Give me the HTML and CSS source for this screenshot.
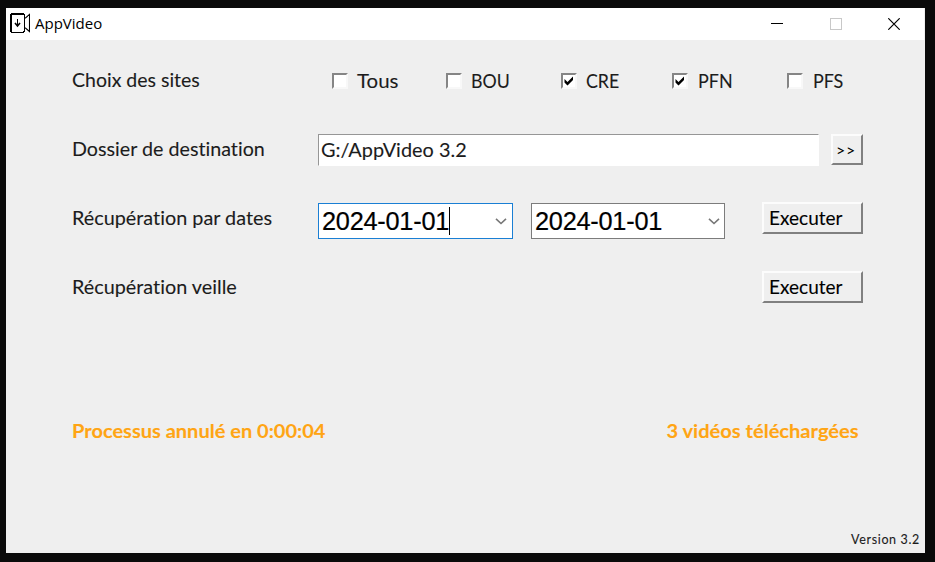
FILE: index.html
```html
<!DOCTYPE html>
<html lang="fr">
<head>
<meta charset="utf-8">
<title>AppVideo</title>
<link rel="stylesheet" href="styles.css">
</head>
<body>
<main class="window">
  <header class="titlebar">
    <svg class="app-icon" width="20" height="20" viewBox="0 0 20 20" fill="none" stroke="#000" shape-rendering="crispEdges">
      <rect x="0.75" y="0.75" width="13.5" height="18.5" rx="1.5" stroke-width="1.5"/>
      <path d="M7.5 6v7" stroke-width="1.4"/>
      <path d="M5 10l2.500 3 2.500-3" stroke-width="1.600" shape-rendering="auto"/>
      <path d="M14 5l1.500 0L19.500 1.500V18.500L15.500 15H14" stroke-width="1.1" shape-rendering="auto"/>
    </svg>
    <h1 class="title">AppVideo</h1>
    <div class="controls">
      <svg width="12" height="12" viewBox="0 0 12 12"><path d="M0 5.500h12" stroke="#000"/></svg>
      <svg width="12" height="12" viewBox="0 0 12 12"><rect x=".5" y=".5" width="11" height="11" fill="none" stroke="#c8c8c8"/></svg>
      <svg width="12" height="12" viewBox="0 0 12 12"><path d="M.3.3l11.400 11.400M11.700.3L.3 11.700" stroke="#000" stroke-width="1.200"/></svg>
    </div>
  </header>
  <section class="form">
    <div class="row">
      <span class="label"><span class="t choix">Choix des sites</span></span>
      <div class="checks">
        <label class="check"><i class="box"></i><span class="t tous">Tous</span></label>
        <label class="check"><i class="box"></i><span class="t site">BOU</span></label>
        <label class="check"><i class="box"><svg width="12" height="12" viewBox="0 0 12 12"><path d="M1.500 4L4.500 7 10 1.500V5L4.500 10.500 1.500 7.500z"/></svg></i><span class="t site">CRE</span></label>
        <label class="check"><i class="box"><svg width="12" height="12" viewBox="0 0 12 12"><path d="M1.500 4L4.500 7 10 1.500V5L4.500 10.500 1.500 7.500z"/></svg></i><span class="t site wide">PFN</span></label>
        <label class="check"><i class="box"></i><span class="t site wide">PFS</span></label>
      </div>
    </div>
    <div class="row">
      <span class="label"><span class="t dossier">Dossier de destination</span></span>
      <div class="entry"><span class="t path">G:/AppVideo 3.2</span></div>
      <button class="button browse"><span class="arrows">&gt;&gt;</span></button>
    </div>
    <div class="row">
      <span class="label"><span class="t recup">Récupération par dates</span></span>
      <div class="combo focused"><span class="date">2024-01-01</span><i class="caret"></i><svg class="chevron" width="12" height="7" viewBox="0 0 12 7"><path d="M1 .8l5 4.700 5-4.700" fill="none" stroke="#777" stroke-width="1.600"/></svg></div>
      <div class="combo second"><span class="date">2024-01-01</span><svg class="chevron" width="12" height="7" viewBox="0 0 12 7"><path d="M1 .8l5 4.700 5-4.700" fill="none" stroke="#777" stroke-width="1.600"/></svg></div>
      <button class="button run"><span class="t exec">Executer</span></button>
    </div>
    <div class="row">
      <span class="label"><span class="t recup">Récupération veille</span></span>
      <button class="button run"><span class="t exec">Executer</span></button>
    </div>
  </section>
  <div class="status">
    <strong class="t s1">Processus annulé en 0:00:04</strong>
    <strong class="t s2">3 vidéos téléchargées</strong>
  </div>
  <footer class="version">Version 3.2</footer>
</main>
</body>
</html>
```

FILE: styles.css
```css
* { box-sizing: border-box; }
html, body { margin: 0; height: 100%; background: #0a0a0a; overflow: hidden; }
body { padding: 8px 10px 9px 6px; font-family: Lato, sans-serif; color: #1c1c1c; font-variant-ligatures: none; }
.window { height: 545px; width: 919px; background: #efefef; display: flex; flex-direction: column; }
.titlebar { height: 32px; width: 918px; background: #fff; display: flex; align-items: center; padding-left: 4px; }
.app-icon { margin-top: -2px; }
.title { margin: -2px 0 0 5px; font: 400 15px/20px "Open Sans", sans-serif; color: #000; white-space: nowrap; }
.controls { margin-left: auto; display: flex; gap: 46px; padding-right: 24px; }
.controls svg:nth-child(1) { margin-right: 1px; }
.form { padding: 6px 62px 0 66px; }
.row { height: 69px; display: flex; padding-top: 19px; }
.row:nth-child(n+3) .button { margin-top: -1px; }
.label { width: 246px; height: 30px; display: flex; align-items: center; flex: none; }
.t { display: inline-block; font-size: 19.500px; line-height: 30px; white-space: nowrap; transform-origin: left center; -webkit-text-stroke: .1px; }
.choix { line-height: 32px; }
.dossier { transform: scaleX(1.010); }
.recup { transform: scaleX(1.016); }
.checks { display: grid; grid-template-columns: 114px 115px 111px 115px 60px; padding-left: 14px; height: 30px; }
.check { display: flex; align-items: center; gap: 9px; }
.check .t { line-height: 32px; }
.tous { transform: scaleX(1.050); }
.site { transform: scaleX(.91); }
.site.wide { transform: translateX(1px) scaleX(.92); }
.box { width: 16px; height: 16px; flex: none; background: #fff; border: 2px solid; border-color: #858585 #f8f8f8 #f8f8f8 #858585; display: block; }
.box svg { display: block; }
.entry { width: 501px; height: 32px; background: #fff; border: 1px solid; border-color: #969696 #fff #fff #969696; padding-left: 2px; }
.path { transform: scaleX(1.020); line-height: 29px; }
.button { border: 2px solid; border-color: #fcfcfc #808080 #808080 #fcfcfc; background: #efefef; height: 32px; padding: 0; margin: 0 0 0 auto; font-family: inherit; color: #000; text-align: left; display: flex; align-items: center; }
.browse { width: 32px; height: 31px; }
.arrows { font-size: 16px; padding-left: 3px; letter-spacing: .8px; }
.run { width: 101px; padding-left: 5px; }
.exec { transform: scaleX(.975); }
.combo { width: 194px; height: 36px; background: #fff; border: 1px solid #7c7c7c; display: flex; align-items: center; padding: 0 4px 0 3px; color: #000; }
.focused { width: 195px; padding-right: 5px; border-color: #1a7fd4; }
.second { margin-left: 18px; }
.date { font: 25.330px/34px "Liberation Sans", sans-serif; letter-spacing: -.25px; -webkit-text-stroke: .2px; }
.caret { width: 1px; height: 28px; background: #000; }
.chevron { margin-left: auto; }
.status { margin: 94px 66px 0 66px; display: flex; justify-content: space-between; color: #ffa514; }
.s1 { transform: scaleX(1.027); }
.s2 { transform-origin: right center; transform: scaleX(1.030); }
.version { margin-top: auto; padding: 0 5px 4px 0; text-align: right; font-size: 12.500px; line-height: 18px; letter-spacing: .65px; -webkit-text-stroke: .1px; }
```
